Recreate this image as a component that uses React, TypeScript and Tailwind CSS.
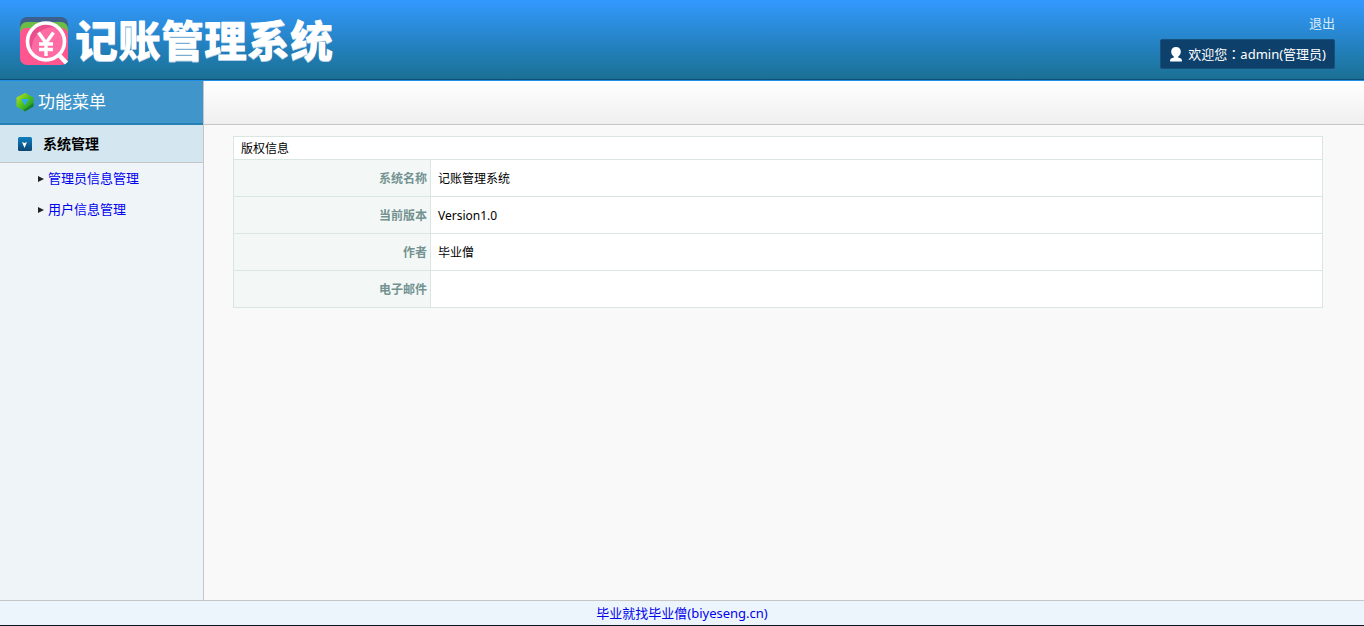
interface InfoRow {
  label: string;
  value: string;
}

const INFO_ROWS: InfoRow[] = [
  { label: '系统名称', value: '记账管理系统' },
  { label: '当前版本', value: 'Version1.0' },
  { label: '作者', value: '毕业僧' },
  { label: '电子邮件', value: '' },
];

const MENU_LINKS = ['管理员信息管理', '用户信息管理'];

function LogoIcon() {
  return (
    <svg width="50" height="50" viewBox="0 0 50 50" aria-hidden="true">
      <defs>
        <clipPath id="lens">
          <circle cx="26" cy="24.500" r="18" />
        </clipPath>
      </defs>
      <rect x="0" y="0" width="48" height="30" rx="7" fill="#3d5f8c" />
      <rect x="0" y="5" width="48" height="30" rx="7" fill="#6cbd45" />
      <path d="M0 17a6 6 0 0 1 6-6h36a6 6 0 0 1 6 6v24a7 7 0 0 1-7 7H7a7 7 0 0 1-7-7z" fill="#ff5690" />
      <circle cx="26" cy="24.500" r="18" fill="#ff6ba2" />
      <path d="M8 40V6h32v5C24 7 10 18 12 36z" fill="#e84f8c" clipPath="url(#lens)" />
      <circle cx="26" cy="24.500" r="18.500" fill="none" stroke="#fff" strokeWidth="3.600" />
      <path d="M38.500 37.500l8 8.500" stroke="#fff" strokeWidth="4.500" />
      <path d="M18.500 15.500L26 26l7.500-10.500M26 26v13M19 27h14M19 32.500h14" fill="none" stroke="#fff" strokeWidth="3.400" />
    </svg>
  );
}

function UserIcon() {
  return (
    <svg width="12" height="15" viewBox="0 0 12 15" fill="#fff" aria-hidden="true">
      <path d="M6 0C3 0 1.200 2 1.200 4.700c0 2 1 3.700 2.600 4.700v1L1 11.500C.3 12 0 13 0 14.500h12c0-1.500-.3-2.500-1-3l-2.800-1.100v-1c1.600-1 2.600-2.700 2.600-4.700C10.800 2 9 0 6 0z" />
    </svg>
  );
}

function HexIcon() {
  return (
    <svg width="18" height="20" viewBox="0 0 18 20" aria-hidden="true">
      <defs>
        <linearGradient id="hex" x1="0" y1="0" x2="1" y2="1">
          <stop offset="0" stopColor="#c8e41c" />
          <stop offset="0.500" stopColor="#4cc01c" />
          <stop offset="1" stopColor="#0a8a3c" />
        </linearGradient>
      </defs>
      <path d="M9 1l8.500 4.500v9L9 19.500l-8.500-5v-9z" fill="url(#hex)" />
      <path d="M17.500 14.500L9 19.500l-2-1.200L17.500 11z" fill="#0a5f35" opacity="0.500" />
      <path d="M5 7h8l-4 6.500z" fill="#2fa8ee" />
    </svg>
  );
}

function FoldIcon() {
  return (
    <svg width="14" height="14" viewBox="0 0 14 14" aria-hidden="true">
      <defs>
        <linearGradient id="fold" x1="0" y1="0" x2="0" y2="1">
          <stop offset="0" stopColor="#0f7fc0" />
          <stop offset="1" stopColor="#0c4672" />
        </linearGradient>
      </defs>
      <rect width="14" height="14" rx="1.500" fill="url(#fold)" />
      <path d="M4 5l2.500 1L9 5 6.500 11z" fill="#fff" />
    </svg>
  );
}

function Header() {
  return (
    <header className="flex h-[81px] shrink-0 justify-between border-b border-[#1e90e8] bg-linear-to-b from-[#3399ff] to-[#1a6f92]">
      <div className="flex flex-1 justify-between border-b border-[#0c4f7c] pr-[29px] pl-5">
        <div className="flex items-center gap-[5px] pt-1">
          <LogoIcon />
          <h1 className="pb-[2px] text-[43px] leading-[48px] font-black text-white [text-shadow:0_1px_0_#b4cfe6]">
            记账管理系统
          </h1>
        </div>
        <div className="flex flex-col items-end gap-1 pt-3 text-[13px] text-white">
          <a href="#logout" className="leading-[22px] text-[#dcecfa]">退出</a>
          <div className="mt-px flex h-[30px] items-center gap-[6px] rounded-xs border border-[#17507b] bg-[#0d416b] pr-2 pl-[9px]">
            <UserIcon />
            <span className="pt-px">
              欢迎您<span className="font-['Noto_Sans_CJK_TC',sans-serif]">：</span>admin(管理员)
            </span>
          </div>
        </div>
      </div>
    </header>
  );
}

function Sidebar() {
  return (
    <aside className="w-[204px] shrink-0 border-r border-[#c6c6c6] bg-[#eef4f8]">
      <div className="flex h-11 items-center gap-1 border-b-2 border-[#2680b4] bg-[#4096ca] pl-4">
        <HexIcon />
        <h2 className="text-[17px] text-white">功能菜单</h2>
      </div>
      <button
        type="button"
        className="flex h-[38px] w-full items-center gap-[11px] border-b border-[#c6c6c6] bg-[#d4e7f0] pl-[18px] text-[14px] font-bold text-black"
      >
        <FoldIcon />
        系统管理
      </button>
      <ul className="text-[13px]">
        {MENU_LINKS.map(text => (
          <li key={text} className="flex h-[31px] items-center gap-1 pt-px pl-[38px]">
            <svg width="6" height="6" viewBox="0 0 6 6" aria-hidden="true">
              <path d="M0 0l6 3-6 3z" fill="#222" />
            </svg>
            <a href="#page" className="text-[#0000ee]">{text}</a>
          </li>
        ))}
      </ul>
    </aside>
  );
}

function InfoTable() {
  return (
    <table className="w-full table-fixed border-collapse bg-white text-[12px] leading-4 text-black">
      <colgroup>
        <col className="w-[197px]" />
        <col />
      </colgroup>
      <thead>
        <tr className="h-[23px]">
          <th colSpan={2} className="border border-[#dae6e2] px-[7px] pt-[2px] text-left font-normal">版权信息</th>
        </tr>
      </thead>
      <tbody>
        {INFO_ROWS.map(row => (
          <tr key={row.label} className="h-[37px]">
            <th className="border border-[#dae6e2] bg-[#f3f8f7] pt-[2px] pr-[3px] text-right font-bold text-[#739290]">
              {row.label}
            </th>
            <td className="border border-[#dae6e2] px-[7px] pt-[2px]">{row.value}</td>
          </tr>
        ))}
      </tbody>
    </table>
  );
}

export default function App() {
  return (
    <div className="flex min-h-screen flex-col font-['Noto_Sans','Noto_Sans_CJK_SC',sans-serif]">
      <Header />
      <div className="flex flex-1">
        <Sidebar />
        <main className="min-w-0 flex-1 bg-[#f9f9f9]">
          <div className="h-11 border-b border-[#c6c6c6] bg-linear-to-b from-white to-[#efefef]" />
          <div className="pt-[11px] pr-[41px] pl-[29px]">
            <InfoTable />
          </div>
        </main>
      </div>
      <footer className="flex h-[26px] shrink-0 items-center justify-center border-t border-b border-t-[#c6c6c6] border-b-[#0b1420] bg-[#edf5fc] pt-px text-[13px]">
        <a href="#site" className="text-[#0000ee]">毕业就找毕业僧(biyeseng.cn)</a>
      </footer>
    </div>
  );
}
